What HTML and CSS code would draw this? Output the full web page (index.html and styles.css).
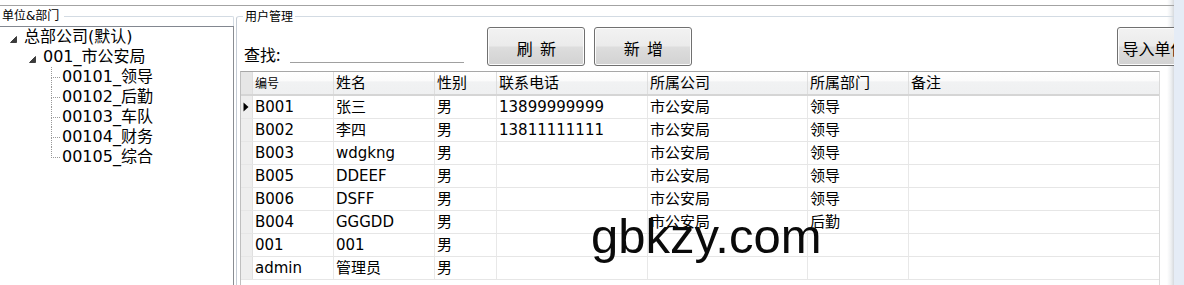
FILE: index.html
```html
<!DOCTYPE html>
<html lang="zh-CN">
<head>
<meta charset="utf-8">
<title>用户管理</title>
<link rel="stylesheet" href="styles.css">
</head>
<body>
<div class="app">
  <div class="main">
    <div class="topline"></div>
    <div class="panels">
      <section class="left">
        <div class="legend-row">
          <span class="legend legend-left">单位&amp;部门</span>
          <span class="legend-line legend-line-left"></span>
        </div>
        <div class="tree">
          <div class="node lvl0">
            <span class="exp"><svg width="7" height="7" viewBox="0 0 7 7"><polygon points="6.5,0.5 6.5,6.5 0.5,6.5" fill="#3c3c3c" stroke="#262626" stroke-width="0.8"/></svg></span>
            <span class="label">总部公司(默认)</span>
          </div>
          <div class="node lvl1">
            <span class="exp"><svg width="7" height="7" viewBox="0 0 7 7"><polygon points="6.5,0.5 6.5,6.5 0.5,6.5" fill="#3c3c3c" stroke="#262626" stroke-width="0.8"/></svg></span>
            <span class="label">001_市公安局</span>
          </div>
          <div class="node lvl2">
            <span class="conn"><span class="conn-top"></span><span class="conn-bot"></span></span>
            <span class="label">00101_领导</span>
          </div>
          <div class="node lvl2">
            <span class="conn"><span class="conn-top"></span><span class="conn-bot"></span></span>
            <span class="label">00102_后勤</span>
          </div>
          <div class="node lvl2">
            <span class="conn"><span class="conn-top"></span><span class="conn-bot"></span></span>
            <span class="label">00103_车队</span>
          </div>
          <div class="node lvl2">
            <span class="conn"><span class="conn-top"></span><span class="conn-bot"></span></span>
            <span class="label">00104_财务</span>
          </div>
          <div class="node lvl2 last">
            <span class="conn"><span class="conn-top"></span><span class="conn-bot"></span></span>
            <span class="label">00105_综合</span>
          </div>
        </div>
      </section>
      <section class="right">
        <div class="legend-row">
          <span class="corner"></span>
          <span class="legend legend-right">用户管理</span>
          <span class="legend-line"></span>
        </div>
        <div class="right-body">
          <div class="toolbar">
            <span class="search-label">查找:</span>
            <span class="search-input"></span>
            <button class="btn btn-first" type="button">刷&nbsp;&nbsp;新</button>
            <button class="btn btn-second" type="button">新&nbsp;&nbsp;增</button>
            <button class="btn btn-import" type="button">导入单位</button>
          </div>
          <div class="grid">
            <div class="row head">
              <span class="cell rh"></span>
              <span class="cell"><span class="small">编号</span></span>
              <span class="cell">姓名</span>
              <span class="cell">性别</span>
              <span class="cell">联系电话</span>
              <span class="cell">所属公司</span>
              <span class="cell">所属部门</span>
              <span class="cell last">备注</span>
            </div>
            <div class="row">
              <span class="cell rh"><svg width="6" height="10" viewBox="0 0 6 10"><polygon points="0.5,0.5 5.5,5 0.5,9.5" fill="#000"/></svg></span>
              <span class="cell">B001</span><span class="cell">张三</span><span class="cell">男</span><span class="cell">13899999999</span><span class="cell">市公安局</span><span class="cell">领导</span><span class="cell last"></span>
            </div>
            <div class="row">
              <span class="cell rh"></span>
              <span class="cell">B002</span><span class="cell">李四</span><span class="cell">男</span><span class="cell">13811111111</span><span class="cell">市公安局</span><span class="cell">领导</span><span class="cell last"></span>
            </div>
            <div class="row">
              <span class="cell rh"></span>
              <span class="cell">B003</span><span class="cell">wdgkng</span><span class="cell">男</span><span class="cell"></span><span class="cell">市公安局</span><span class="cell">领导</span><span class="cell last"></span>
            </div>
            <div class="row">
              <span class="cell rh"></span>
              <span class="cell">B005</span><span class="cell">DDEEF</span><span class="cell">男</span><span class="cell"></span><span class="cell">市公安局</span><span class="cell">领导</span><span class="cell last"></span>
            </div>
            <div class="row">
              <span class="cell rh"></span>
              <span class="cell">B006</span><span class="cell">DSFF</span><span class="cell">男</span><span class="cell"></span><span class="cell">市公安局</span><span class="cell">领导</span><span class="cell last"></span>
            </div>
            <div class="row">
              <span class="cell rh"></span>
              <span class="cell">B004</span><span class="cell">GGGDD</span><span class="cell">男</span><span class="cell"></span><span class="cell">市公安局</span><span class="cell">后勤</span><span class="cell last"></span>
            </div>
            <div class="row">
              <span class="cell rh"></span>
              <span class="cell">001</span><span class="cell">001</span><span class="cell">男</span><span class="cell"></span><span class="cell"></span><span class="cell"></span><span class="cell last"></span>
            </div>
            <div class="row">
              <span class="cell rh"></span>
              <span class="cell">admin</span><span class="cell">管理员</span><span class="cell">男</span><span class="cell"></span><span class="cell"></span><span class="cell"></span><span class="cell last"></span>
            </div>
          </div>
        </div>
      </section>
    </div>
  </div>
  <div class="side"></div>
</div>
<div class="watermark">gbkzy.com</div>
</body>
</html>
```

FILE: styles.css
```css
* { box-sizing: border-box; }
html, body { margin: 0; padding: 0; }
body {
  width: 1184px;
  height: 285px;
  overflow: hidden;
  background: #fff;
  color: #000;
  font-family: "DejaVu Sans", "Noto Sans CJK SC", sans-serif;
  position: relative;
}
.app { display: flex; height: 285px; }
.main {
  width: 1174px;
  flex: none;
  display: flex;
  flex-direction: column;
  overflow: hidden;
  background: linear-gradient(to right, #fff 1167px, #eef0f2 1171px, #d6d9dd 1174px);
}
.side { flex: 1; background: #e5ecf6; }
.topline { height: 6px; flex: none; border-bottom: 1px solid #a3a3a3; }
.panels { display: flex; flex: 1; min-height: 0; }

/* group legends */
.legend-row { display: flex; height: 20px; flex: none; }
.legend {
  flex: none;
  font-size: 12px;
  line-height: 14px;
  margin-top: 3px;
  white-space: nowrap;
  font-family: "Noto Sans CJK SC", sans-serif;
}
.legend-left { padding-left: 2px; padding-right: 5px; font-family: "DejaVu Sans", "Noto Sans CJK SC", sans-serif; }
.legend-right { padding: 0 2px; }
.legend-line {
  flex: 1;
  margin-top: 10px;
  border-top: 1px solid #d3dbe3;
}
.legend-line-left { border-right: 1px solid #d3dbe3; border-top-right-radius: 2px; }
.corner {
  flex: none;
  width: 7px;
  margin-top: 10px;
  border-top: 1px solid #d3dbe3;
  border-left: 1px solid #c5ccd5;
  border-top-left-radius: 3px;
}

/* left tree */
.left { width: 234px; flex: none; display: flex; flex-direction: column; }
.tree {
  flex: 1;
  border-top: 1px solid #828790;
  border-right: 1px solid #8a8d92;
  font-size: 16px;
}
.node { display: flex; height: 20px; align-items: stretch; }
.node .label { line-height: 20px; white-space: nowrap; }
.lvl0 { padding-left: 5px; }
.lvl1 { padding-left: 24px; }
.lvl2 { padding-left: 43px; }
.exp { flex: none; width: 19px; display: flex; align-items: center; padding-left: 5px; padding-top: 4px; }
.exp svg { display: block; }
.conn { flex: none; width: 19px; display: flex; flex-direction: column; }
.conn-top {
  height: 11px;
  width: 9px;
  margin-left: 8px;
  border-left: 1px dotted #999;
  border-bottom: 1px dotted #999;
}
.conn-bot { flex: 1; margin-left: 8px; border-left: 1px dotted #999; }
.last .conn-bot { border-left: none; }

/* right panel */
.right { flex: 1; margin-left: 2px; display: flex; flex-direction: column; min-width: 0; }
.right-body {
  flex: 1;
  border-left: 1px solid #c5ccd5;
  padding-left: 3px;
  display: flex;
  flex-direction: column;
  min-height: 0;
}
.toolbar {
  display: flex;
  align-items: flex-end;
  height: 39px;
  margin-top: 1px;
  flex: none;
}
.search-label {
  flex: none;
  white-space: nowrap;
  margin-left: 4px;
  margin-bottom: 2px;
  font-size: 16px;
  line-height: 20px;
  font-family: "Noto Sans CJK SC", sans-serif;
}
.search-input {
  width: 174px;
  height: 20px;
  margin-left: 10px;
  margin-bottom: 3px;
  border-bottom: 1px solid #a0a0a0;
  flex: none;
}
.btn {
  flex: none;
  width: 98px;
  height: 39px;
  margin: 0;
  padding: 2px 0 0;
  border: 1px solid #707070;
  border-radius: 3px;
  background: linear-gradient(#f2f2f2 0%, #ebebeb 48%, #dddddd 52%, #d2d2d2 100%);
  font-family: "Noto Sans CJK SC", sans-serif;
  font-size: 16px;
  line-height: 20px;
  color: #000;
  white-space: nowrap;
  box-shadow: inset 0 0 0 1px #fcfcfc;
}
.btn-first { margin-left: 23px; }
.btn-second { margin-left: 9px; }
.btn-import { margin-left: 425px; width: 90px; text-align: left; padding-left: 4px; }

/* grid */
.grid {
  margin-top: 5px;
  width: 920px;
  flex: 1;
  border-top: 1px solid #a7a7a7;
  border-left: 1px solid #bfbfbf;
  border-right: 1px solid #dadada;
  overflow: hidden;
  font-size: 15px;
}
.row {
  display: grid;
  grid-template-columns: 12px 81px 101px 62px 151px 160px 101px 250px;
  height: 23px;
  border-bottom: 1px solid #e6e6e6;
}
.cell {
  display: flex;
  align-items: center;
  padding-left: 2px;
  border-right: 1px solid #e8e8e8;
  white-space: nowrap;
  overflow: hidden;
  line-height: 22px;
}
.cell.last { border-right: none; }
.cell.rh {
  padding-left: 2px;
  background: #eeeeee;
  border-right: 1px solid #e0e0e0;
}
.row.head {
  height: 24px;
  border-bottom: 2px solid #d5d5d5;
  background: linear-gradient(#ffffff 0%, #fbfbfb 40%, #f1f2f3 45%, #eff0f1 100%);
}
.row.head .cell { border-right: 1px solid #dedede; line-height: 20px; }
.row.head .cell.last { border-right: none; }
.row.head .cell.rh { background: #e6e6e6; }
.small {
  font-size: 12px;
  line-height: 14px;
  align-self: flex-start;
  margin-top: 4px;
  font-family: "Noto Sans CJK SC", sans-serif;
}

/* watermark overlay */
.watermark {
  position: absolute;
  left: 591px;
  top: 212px;
  font-family: "Liberation Sans", Arial, sans-serif;
  font-size: 49px;
  line-height: 49px;
  color: #0a0a0a;
  white-space: nowrap;
}
```
